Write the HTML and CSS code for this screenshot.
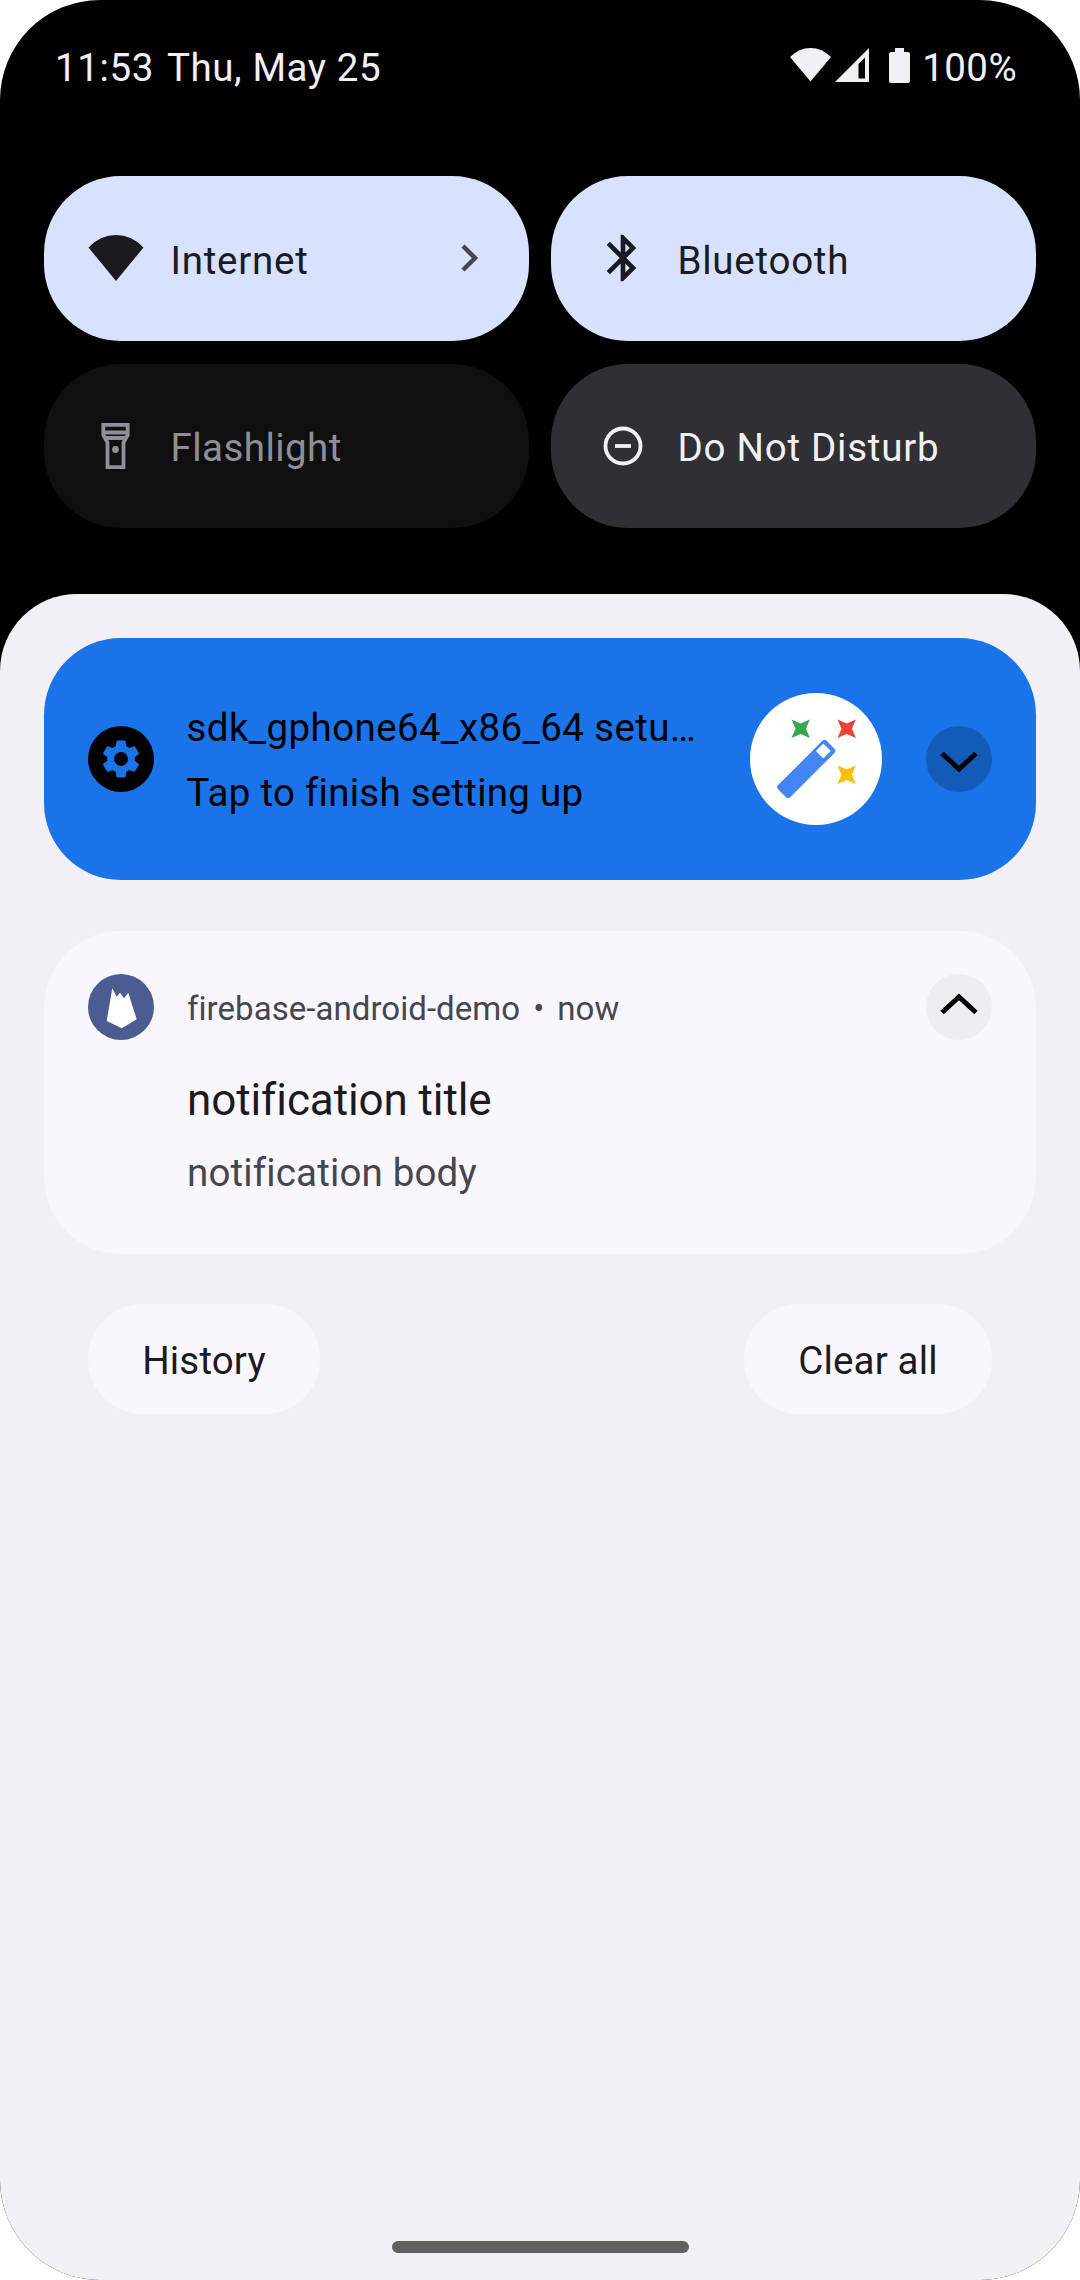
FILE: index.html
```html
<!DOCTYPE html>
<html lang="en">
<head>
  <meta charset="UTF-8">
  <meta name="viewport" content="width=device-width, initial-scale=1.0">
  <link rel="stylesheet" href="styles.css">
  <title>Notification Shade</title>
</head>
<body>
  <div class="screen">
    <div class="status-bar">
      <div class="clock"><span>11:53</span><span>Thu, May 25</span></div>
      <div class="status-icons">
        <svg class="status-wifi" viewBox="0 0 41 34"><path d="M20.5 33.5 0 9Q9 0 20.5 0T41 9Z"/></svg>
        <svg class="status-signal" viewBox="0 0 34 34"><path fill-rule="evenodd" d="M34 0V34H0ZM30 9.500 23.500 16V30.500H30Z"/></svg>
        <svg class="status-battery" viewBox="0 0 21 35"><path d="M6 0H15V4H19Q21 4 21 6V33Q21 35 19 35H2Q0 35 0 33V6Q0 4 2 4H6Z"/></svg>
        <span class="battery-text">100%</span>
      </div>
    </div>

    <div class="tiles">
      <div class="tile tile-on">
        <svg class="tile-icon" viewBox="0 0 56 56"><path d="M28 51 .5 17.500Q12 5 28 5T55.500 17.500Z"/></svg>
        <span class="tile-label">Internet</span>
        <svg class="tile-arrow" viewBox="0 0 18 28"><path d="M2 2 14 14 2 26"/></svg>
      </div>
      <div class="tile tile-on">
        <svg class="tile-icon" viewBox="0 0 24 24"><path d="M17.710 7.710 12 2h-1v7.590L6.410 5 5 6.410 10.590 12 5 17.590 6.410 19 11 14.410V22h1l5.710-5.710-4.300-4.290 4.300-4.290zM13 5.830l1.880 1.880L13 9.590V5.830zm1.880 10.460L13 18.170v-3.760l1.880 1.880z"/></svg>
        <span class="tile-label">Bluetooth</span>
      </div>
      <div class="tile tile-off">
        <svg class="tile-icon" viewBox="0 0 56 56">
          <path class="line" d="M15.300 6.800H39.700V17L35.500 24.500V49.200H19.500V24.500L15.300 17ZM15.300 14.500H39.700M16 20H39"/>
          <circle cx="27.500" cy="31.500" r="3.400"/>
        </svg>
        <span class="tile-label">Flashlight</span>
      </div>
      <div class="tile tile-dim">
        <svg class="tile-icon" viewBox="0 0 56 56">
          <circle class="line" cx="28" cy="28" r="17.500"/>
          <path class="line" d="M20 28H36"/>
        </svg>
        <span class="tile-label">Do Not Disturb</span>
      </div>
    </div>

    <div class="panel">
      <div class="setup-card">
        <div class="app-icon gear-icon">
          <svg viewBox="0 0 24 24"><path d="M19.140 12.940c.04-.3.06-.61.06-.94 0-.32-.02-.64-.07-.94l2.030-1.580c.18-.14.23-.41.12-.61l-1.920-3.320c-.12-.22-.37-.29-.59-.22l-2.390.96c-.5-.38-1.030-.7-1.620-.94l-.36-2.540c-.04-.24-.24-.41-.48-.41h-3.840c-.24 0-.43.17-.47.41l-.36 2.540c-.59.24-1.130.57-1.620.94l-2.390-.96c-.22-.08-.47 0-.59.22L2.740 8.870c-.12.21-.08.47.12.61l2.030 1.580c-.05.3-.09.63-.09.94s.02.64.07.94l-2.030 1.580c-.18.14-.23.41-.12.61l1.920 3.320c.12.22.37.29.59.22l2.390-.96c.5.38 1.030.7 1.620.94l.36 2.540c.05.24.24.41.48.41h3.840c.24 0 .44-.17.47-.41l.36-2.540c.59-.24 1.130-.56 1.620-.94l2.390.96c.22.08.47 0 .59-.22l1.920-3.320c.12-.22.07-.47-.12-.61l-2.010-1.580zM12 15.600c-1.980 0-3.600-1.620-3.600-3.600s1.620-3.600 3.600-3.600 3.600 1.620 3.600 3.600-1.620 3.600-3.600 3.600z"/></svg>
        </div>
        <div class="setup-text">
          <div class="setup-title">sdk_gphone64_x86_64 setu…</div>
          <div class="setup-body">Tap to finish setting up</div>
        </div>
        <svg class="wizard" viewBox="0 0 132 132">
          <circle cx="66" cy="66" r="66" fill="#fff"/>
          <path fill="#34a853" d="M41.500 26.500 50.700 30.500 59.900 26.500 55.900 35.700 59.900 44.900 50.700 40.900 41.500 44.900 45.500 35.700Z"/>
          <path fill="#ea4335" d="M87.500 26.500 96.700 30.500 105.900 26.500 101.900 35.700 105.900 44.900 96.700 40.900 87.500 44.900 91.500 35.700Z"/>
          <path fill="#fbbc04" d="M87.500 72.500 96.700 76.500 105.900 72.500 101.900 81.700 105.900 90.900 96.700 86.900 87.500 90.900 91.500 81.700Z"/>
          <rect x="47.800" y="41.700" width="17" height="68.600" rx="3" fill="#4285f4" transform="rotate(45 56.300 76)"/>
          <rect x="68" y="52.700" width="10.600" height="10.600" rx="1" fill="#fff" transform="rotate(45 73.300 58)"/>
        </svg>
        <div class="expand expand-blue">
          <svg viewBox="0 0 66 66"><path d="M16 27.500 33 43 50 27.500"/></svg>
        </div>
      </div>

      <div class="demo-card">
        <div class="demo-head">
          <div class="app-icon firebase-icon">
            <svg viewBox="0 0 66 66"><path d="M24.300 14.300 28.700 22.700 32 18.700 36 24.300 40.300 18.700 48.700 45.300 33.700 54.300 18.700 47Z"/></svg>
          </div>
          <div class="demo-meta"><span>firebase-android-demo</span><span class="dot">•</span><span>now</span></div>
          <div class="expand expand-light">
            <svg viewBox="0 0 66 66"><path d="M16 38.500 33 23 50 38.500"/></svg>
          </div>
        </div>
        <div class="demo-title">notification title</div>
        <div class="demo-body">notification body</div>
      </div>

      <div class="footer-actions">
        <div class="pill-btn history-btn">History</div>
        <div class="pill-btn clear-btn">Clear all</div>
      </div>

      <div class="home-bar"></div>
    </div>
  </div>
</body>
</html>
```

FILE: styles.css
```css
* {
  box-sizing: border-box;
}

body {
  margin: 0;
  background-color: #fff;
  font-family: 'Roboto', sans-serif;
}

.screen {
  width: 1080px;
  height: 2280px;
  background-color: #000;
  border-radius: 100px;
  overflow: hidden;
  display: flex;
  flex-direction: column;
}

.status-bar {
  height: 176px;
  padding: 0 63px 0 55px;
  display: flex;
  justify-content: space-between;
  align-items: flex-start;
  color: #f2f0f5;
  font-size: 38.5px;
  line-height: 45px;
  letter-spacing: 0.4px;
}

.clock {
  margin-top: 44.5px;
  display: flex;
  gap: 13px;
  letter-spacing: 0.6px;
}

.status-icons {
  margin-top: 44px;
  display: flex;
  align-items: flex-start;
  fill: #f2f0f5;
}

.status-wifi {
  width: 41px;
  height: 34px;
  margin-top: 4px;
}

.status-signal {
  width: 34px;
  height: 34px;
  margin: 4px 0 0 4px;
}

.status-battery {
  width: 21px;
  height: 35px;
  margin: 4px 0 0 20px;
}

.battery-text {
  margin: 0.5px 0 0 12px;
}

.tiles {
  display: grid;
  grid-template-columns: 485px 485px;
  grid-auto-rows: 164.5px;
  gap: 23px 22px;
  padding: 0 44px;
}

.tile {
  display: flex;
  align-items: center;
  padding: 0 50.5px 0 44px;
  border-radius: 77px;
  font-size: 38.5px;
  letter-spacing: 0.75px;
}

.tile-icon {
  width: 56px;
  height: 56px;
  margin-right: 26.5px;
  flex-shrink: 0;
}

.tile-label {
  flex: 1;
  padding-top: 3px;
}

.tile-arrow {
  width: 18px;
  height: 28px;
  fill: none;
  stroke: #46464f;
  stroke-width: 4.5px;
}

.tile-on {
  background-color: #d8e2ff;
  color: #1b1b1f;
  fill: #1b1b1f;
}

.tile-on .tile-label {
  padding-top: 5px;
}

.tile-off {
  background-color: #0f0f0f;
  color: #8f8f99;
  fill: #8f8f99;
  letter-spacing: 0.45px;
}

.tile-off .line {
  fill: none;
  stroke: #8f8f99;
  stroke-width: 3.8px;
}

.tile-dim {
  background-color: #303034;
  color: #f2f0f5;
}

.tile-dim .line {
  fill: none;
  stroke: #f2f0f5;
  stroke-width: 3.8px;
}

.panel {
  flex: 1;
  margin-top: 66px;
  padding: 44px 44px 27px;
  background-color: #f2f0f5;
  border-radius: 77px 77px 0 0;
  display: flex;
  flex-direction: column;
}

.setup-card {
  height: 241.5px;
  padding: 0 44px;
  background-color: #1a73e8;
  border-radius: 77px;
  display: flex;
  align-items: center;
  color: #000;
}

.app-icon {
  width: 66px;
  height: 66px;
  border-radius: 50%;
  flex-shrink: 0;
  display: flex;
  align-items: center;
  justify-content: center;
}

.gear-icon {
  background-color: #000;
  fill: #1a73e8;
}

.gear-icon svg {
  width: 46px;
  height: 46px;
}

.setup-text {
  width: 510px;
  margin-left: 32.5px;
  padding-top: 3px;
  font-size: 38.5px;
  line-height: 64px;
}

.setup-title {
  white-space: nowrap;
  letter-spacing: 0.4px;
}

.setup-body {
  padding-top: 1px;
  letter-spacing: 0.25px;
}

.wizard {
  width: 132px;
  height: 132px;
  margin-left: 53px;
  flex-shrink: 0;
}

.expand {
  width: 66px;
  height: 66px;
  border-radius: 50%;
  flex-shrink: 0;
  margin-left: auto;
}

.expand svg {
  display: block;
  fill: none;
  stroke: #000;
  stroke-width: 5px;
}

.expand-blue {
  background-color: #135bb8;
}

.expand-light {
  background-color: #efedf1;
}

.demo-card {
  height: 323.5px;
  margin-top: 51px;
  padding: 43px 44px 0;
  background-color: #f9f7fd;
  border-radius: 77px;
}

.demo-head {
  display: flex;
  align-items: center;
}

.firebase-icon {
  background-color: #4a5c92;
  fill: #fff;
}

.firebase-icon svg {
  width: 66px;
  height: 66px;
  filter: blur(0.6px);
}

.demo-meta {
  margin: 4px 0 0 33px;
  display: flex;
  gap: 13px;
  font-size: 33px;
  letter-spacing: 0.05px;
  color: #46464f;
}

.demo-title {
  margin: 34.5px 0 0 99px;
  font-size: 44px;
  line-height: 52px;
  letter-spacing: -0.1px;
  color: #1b1b1f;
}

.demo-body {
  margin: 24px 0 0 99px;
  font-size: 38.5px;
  line-height: 45px;
  letter-spacing: 0.15px;
  color: #46464f;
}

.footer-actions {
  margin-top: 50px;
  padding: 0 44px;
  display: flex;
  justify-content: space-between;
}

.pill-btn {
  height: 110px;
  padding-top: 4px;
  border-radius: 55px;
  background-color: #f9f7fd;
  color: #1b1b1f;
  font-size: 38.5px;
  line-height: 106px;
  letter-spacing: 0.15px;
  text-align: center;
}

.history-btn {
  width: 232px;
}

.clear-btn {
  width: 248px;
}

.home-bar {
  width: 297px;
  height: 12px;
  margin: auto auto 0;
  border-radius: 6px;
  background-color: #616161;
}
```
